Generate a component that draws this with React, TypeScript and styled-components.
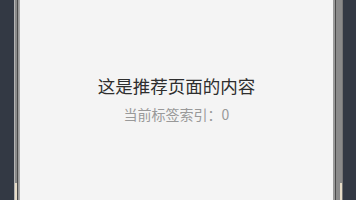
import React from 'react'
import styled, { createGlobalStyle } from 'styled-components'

const GlobalStyle = createGlobalStyle`
  html, body {
    margin: 0;
    padding: 0;
    background: #333944;
    font-family: "Noto Sans CJK SC", "Noto Sans", sans-serif;
  }
  #root {
    height: 200px;
    overflow: hidden;
  }
`

const Stage = styled.div`
  display: flex;
  justify-content: center;
  padding-left: 1px;
  height: 200px;
`

const Phone = styled.div`
  position: relative;
  width: 329px;
  height: 200px;
  box-sizing: border-box;
  display: flex;
  border-left: 1px solid #b4b4b4;
  border-right: 1px solid #777;
  background: #8a8a8a;
  padding: 0 8px 0 8px;

  &::before,
  &::after {
    content: '';
    position: absolute;
    bottom: 0;
    width: 2px;
    height: 17px;
    background: #e6dcc8;
  }
  &::before {
    left: 0;
  }
  &::after {
    right: 0;
  }
`

const Bezel = styled.div`
  flex: 1;
  display: flex;
  border-left: 1px solid #4a4a4a;
  border-right: 1px solid #4a4a4a;
  box-shadow: inset 2px 0 0 #9a9a9a, inset -2px 0 0 #9a9a9a;
  padding: 0 2px;
  margin-left: -6px;
  margin-right: -2px;
`

const Screen = styled.div`
  flex: 1;
  background: #f4f4f4;
  display: flex;
  flex-direction: column;
  align-items: center;
  padding-top: 74px;
  box-shadow: -1px 0 0 #ababab;
`

const Title = styled.div`
  font-size: 17.5px;
  line-height: 24px;
  color: #2e2e2e;
`

const Sub = styled.div`
  margin-top: 6px;
  font-size: 14px;
  line-height: 20px;
  color: #999;
`

export default function App() {
  const index = 0
  return (
    <>
      <GlobalStyle />
      <Stage>
        <Phone>
          <Bezel>
            <Screen>
              <Title>这是推荐页面的内容</Title>
              <Sub>当前标签索引：{index}</Sub>
            </Screen>
          </Bezel>
        </Phone>
      </Stage>
    </>
  )
}
